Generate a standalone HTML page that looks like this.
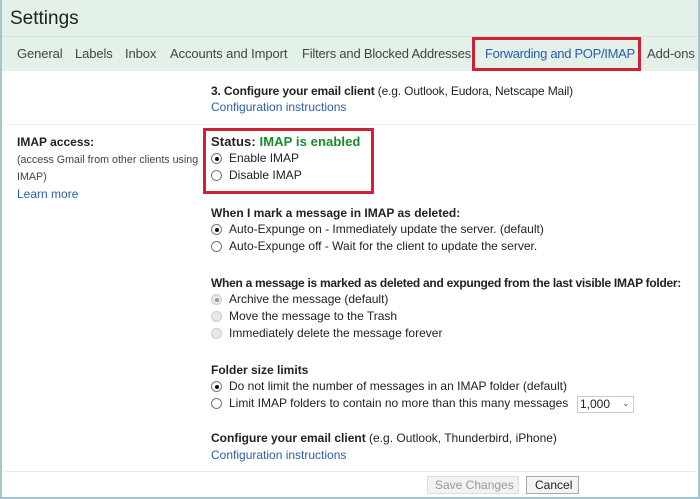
<!DOCTYPE html>
<html><head><meta charset="utf-8"><style>
*{margin:0;padding:0;box-sizing:border-box}
body{width:700px;height:499px;background:#fff;font-family:"Liberation Sans",sans-serif;color:#222;position:relative;overflow:hidden;font-size:12px;letter-spacing:0}
.t{position:absolute;white-space:nowrap;line-height:14px}
.b{font-weight:bold}
.l{color:#2a5db0}
.r{position:absolute;width:11px;height:11px;border:1px solid #777;border-radius:50%;background:#fff}
.r.on::after{content:"";position:absolute;left:2.5px;top:2.5px;width:4px;height:4px;border-radius:50%;background:#111}
.r.g{border-color:#ccc;background:#e8e8e8}
.r.g.on::after{background:#999}
</style></head><body>
<div style="position:absolute;left:0;top:0;width:700px;height:71px;background:#e3f1e8"></div>
<div style="position:absolute;left:0;top:36px;width:700px;height:1px;background:#d3e6da"></div>
<div style="position:absolute;left:0;top:0;width:2px;height:499px;background:#a9c3cf"></div>
<div style="position:absolute;left:0;top:497px;width:700px;height:2px;background:#a9c3cf"></div>
<div style="position:absolute;left:698px;top:0;width:2px;height:499px;background:#a9c3cf"></div>
<div class="t" style="left:10px;top:8px;font-size:19px;line-height:22px;color:#222">Settings</div>
<div class="t" style="top:47px;font-size:13px;color:#444;letter-spacing:-0.1px;left:17px">General</div>
<div class="t" style="top:47px;font-size:13px;color:#444;letter-spacing:-0.1px;left:75px">Labels</div>
<div class="t" style="top:47px;font-size:13px;color:#444;letter-spacing:-0.1px;left:125px">Inbox</div>
<div class="t" style="top:47px;font-size:13px;color:#444;letter-spacing:-0.1px;left:170px">Accounts and Import</div>
<div class="t" style="top:47px;font-size:13px;color:#444;letter-spacing:-0.2px;left:302px">Filters and Blocked Addresses</div>
<div class="t" style="top:47px;font-size:13px;color:#2a5db0;letter-spacing:-0.3px;left:485px">Forwarding and POP/IMAP</div>
<div class="t" style="top:47px;font-size:13px;color:#444;letter-spacing:-0.1px;left:647px">Add-ons</div>
<div style="position:absolute;left:472px;top:37px;width:169px;height:34px;border:3px solid #cc2233"></div>

<div class="t" style="left:211px;top:84px;letter-spacing:-0.15px"><b>3. Configure your email client</b> (e.g. Outlook, Eudora, Netscape Mail)</div>
<div class="t l" style="left:211px;top:100px">Configuration instructions</div>
<div style="position:absolute;left:5px;top:124px;width:690px;height:1px;background:#eee"></div>

<div class="t b" style="left:17px;top:135px">IMAP access:</div>
<div class="t" style="left:17px;top:153px;font-size:10.7px;color:#444">(access Gmail from other clients using</div>
<div class="t" style="left:17px;top:170px;font-size:10.7px;color:#444">IMAP)</div>
<div class="t l" style="left:17px;top:187px">Learn more</div>

<div class="t b" style="left:211px;top:134px;font-size:13px;line-height:16px;letter-spacing:0.1px">Status: <span style="color:#178b2a">IMAP is enabled</span></div>
<div class="r on" style="left:211px;top:153px"></div><div class="t" style="left:229px;top:151px">Enable IMAP</div>
<div class="r" style="left:211px;top:170px"></div><div class="t" style="left:229px;top:168px">Disable IMAP</div>
<div style="position:absolute;left:203px;top:128px;width:171px;height:66px;border:3px solid #cc2233"></div>

<div class="t b" style="left:211px;top:206px">When I mark a message in IMAP as deleted:</div>
<div class="r on" style="left:211px;top:224px"></div><div class="t" style="left:229px;top:222px">Auto-Expunge on - Immediately update the server. (default)</div>
<div class="r" style="left:211px;top:241px"></div><div class="t" style="left:229px;top:239px">Auto-Expunge off - Wait for the client to update the server.</div>

<div class="t b" style="left:211px;top:276px;letter-spacing:-0.28px">When a message is marked as deleted and expunged from the last visible IMAP folder:</div>
<div class="r g on" style="left:211px;top:294px"></div><div class="t" style="left:229px;top:292px">Archive the message (default)</div>
<div class="r g" style="left:211px;top:311px"></div><div class="t" style="left:229px;top:309px">Move the message to the Trash</div>
<div class="r g" style="left:211px;top:328px"></div><div class="t" style="left:229px;top:326px">Immediately delete the message forever</div>

<div class="t b" style="left:211px;top:363px">Folder size limits</div>
<div class="r on" style="left:211px;top:381px"></div><div class="t" style="left:229px;top:379px">Do not limit the number of messages in an IMAP folder (default)</div>
<div class="r" style="left:211px;top:398px"></div><div class="t" style="left:229px;top:396px">Limit IMAP folders to contain no more than this many messages</div>
<div style="position:absolute;left:577px;top:396px;width:57px;height:17px;border:1px solid #ccc"></div>
<div class="t" style="left:580px;top:397px">1,000</div>
<div class="t" style="left:622px;top:396px;font-size:9px;color:#555">⌄</div>

<div class="t" style="left:211px;top:431px"><b>Configure your email client</b> (e.g. Outlook, Thunderbird, iPhone)</div>
<div class="t l" style="left:211px;top:448px">Configuration instructions</div>
<div style="position:absolute;left:5px;top:471px;width:690px;height:1px;background:#e6e6e6"></div>
<div style="position:absolute;left:427px;top:476px;width:92px;height:18px;background:#f2f2f2;border:1px solid #ddd"></div>
<div class="t" style="left:435px;top:478px;color:#999">Save Changes</div>
<div style="position:absolute;left:526px;top:476px;width:53px;height:18px;background:#f4f4f4;border:1px solid #aaa"></div>
<div class="t" style="left:535px;top:478px;color:#222">Cancel</div>
</body></html>
